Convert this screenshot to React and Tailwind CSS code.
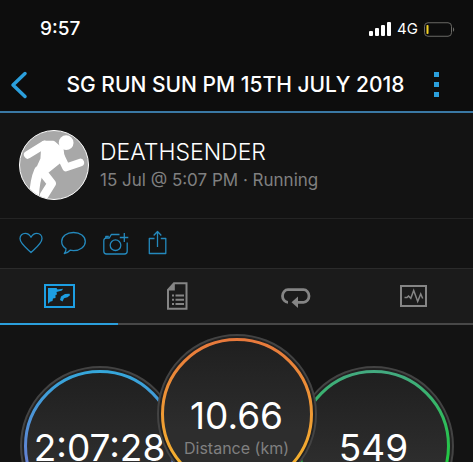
import { useState } from 'react'
import clsx from 'clsx'

const SignalIcon = () => (
  <svg width="22" height="14" viewBox="0 0 22 14" fill="#fff">
    <rect x="0" y="9" width="4" height="5" rx="1" />
    <rect x="6" y="6" width="4" height="8" rx="1" />
    <rect x="12" y="3" width="4" height="11" rx="1" />
    <rect x="18" y="0" width="4" height="14" rx="1" />
  </svg>
)

const BatteryIcon = () => (
  <svg width="31" height="15" viewBox="0 0 31 15" fill="none">
    <rect x="0.5" y="0.75" width="27" height="13.5" rx="3.5" stroke="#6a6965" />
    <rect x="2.5" y="3" width="2" height="9" rx="0.8" fill="#f5d327" />
    <path d="M29 5.2c1.6.7 1.6 3.9 0 4.6z" fill="#6a6965" />
  </svg>
)

const RunnerIcon = () => (
  <svg viewBox="0 0 70 70" className="h-full w-full" fill="none" stroke="#fff" strokeLinecap="round" strokeLinejoin="round">
    <circle cx="47.5" cy="12" r="7.6" fill="#fff" stroke="none" />
    <path d="M8 24.5 25 14" strokeWidth="8" />
    <path d="M39 20 47.5 37.5 62 32.5" strokeWidth="8" />
    <path d="M25 13 34 13 42 20 43 28 28 40 19 40 24 29z" fill="#fff" strokeWidth="6" />
    <path d="M19.5 41C16 49 15 56 14.5 67" strokeWidth="10" />
    <path d="M23 42 32.5 54 25 66" strokeWidth="9" />
  </svg>
)

const actions = [
  {
    label: 'Like',
    icon: <path d="M13 22.5C9.5 19 2 13.8 2 8.6 2 5.3 4.4 3.3 7.2 3.3c2.600 0 4.600 1.500 5.800 3.900 1.200-2.400 3.200-3.900 5.800-3.900 2.800 0 5.200 2 5.200 5.300 0 5.200-7.500 10.400-11 13.900z" />
  },
  {
    label: 'Comment',
    icon: <path d="M13.5 2.5c6.7 0 11.8 3.9 11.8 9s-5.100 9.100-11.800 9.100c-1.200 0-2.300-.1-3.400-.4-1.500 1.700-3.500 2.900-5.800 3.300 1.200-1.300 1.800-3 1.700-4.700-2.600-1.700-4.300-4.300-4.300-7.300 0-5.100 5.100-9 11.800-9z" />
  },
  {
    label: 'Add photo',
    icon: (
      <>
        <path d="M17.5 4.5H9.3L7.3 8H4.5c-1.7 0-2.7 1-2.7 2.7v10.6C1.8 23 2.8 24 4.5 24h18c1.7 0 2.7-1 2.7-2.7V12.5" />
        <path d="M3.8 8V6.5h3M22.3 3v9M17.8 7.5h8.5" />
        <circle cx="13.5" cy="15.2" r="5.3" />
      </>
    )
  },
  {
    label: 'Share',
    icon: <path d="M10.5 8.5H5.3v15h16.5v-15h-5M13.5 17V1.5M9.7 5.5l3.8-4 3.8 4" />
  }
]

const tabs = [
  {
    label: 'Map',
    icon: (
      <>
        <rect x="2" y="4" width="29" height="22" stroke="currentColor" strokeWidth="2" />
        <path d="M5 7h8.5l1 1.5 5.5-.8-1 1.800-5.500 1.500.5 2.500-1.500.5v3L10 17.500l-.5 2.500-2.500.8L5.500 22.500H5z" fill="currentColor" />
        <path d="M17 19l1-3.500 4-2.500 4.500-.3.500 1.500-2.500 2-3.500 1L19.500 20.500z" fill="currentColor" />
      </>
    )
  },
  {
    label: 'Details',
    icon: (
      <>
        <path d="M13 2.3h12.5v25.5H7V8.800z" stroke="currentColor" strokeWidth="2" />
        <path d="M13.8 2v7.5H6.5z" fill="currentColor" />
        <path d="M11 14.5h2M11 18.700h2M11 22.900h2M14.500 14.500h8.500M14.500 18.700h8.500M14.500 22.900h8.500" stroke="currentColor" strokeWidth="2" />
      </>
    )
  },
  {
    label: 'Laps',
    icon: (
      <>
        <path d="M9 21.3A5.5 6.3 0 0 1 9 8.7h15.500a5.500 6.300 0 0 1 0 12.600H18" stroke="currentColor" strokeWidth="2.8" />
        <path d="M12.5 21.3 19 15.500v11.500z" fill="currentColor" />
      </>
    )
  },
  {
    label: 'Charts',
    icon: (
      <>
        <rect x="4" y="5" width="25" height="20" stroke="currentColor" strokeWidth="2" />
        <path d="M7.5 16.5H10l1.5-1.5 2.300 2.300L16.700 9.500l4 11 3-7.500 2 4.500" stroke="currentColor" strokeWidth="1.5" />
      </>
    )
  }
]

const gauges = [
  { id: 'time', value: '2:07:28', from: '#35a7db', to: '#7b6fd0' },
  { id: 'distance', value: '10.66', label: 'Distance (km)', from: '#e8793c', to: '#f5b52e', main: true },
  { id: 'calories', value: '549', from: '#43aa80', to: '#10d822' }
]

const Gauge = ({ id, value, label, from, to, main }) => (
  <div className={clsx('grid size-40 shrink-0', main ? 'z-10 -mx-[23px]' : 'mt-8')}>
    <svg viewBox="0 0 160 160" className="col-start-1 row-start-1 size-40 overflow-visible">
      <defs>
        <linearGradient id={`ring-${id}`} x1="0" y1="0" x2="0" y2="1">
          <stop offset="0" stopColor={from} />
          <stop offset="0.9" stopColor={to} />
        </linearGradient>
        <linearGradient id={`fill-${id}`} x1="0" y1="0" x2="0" y2="1">
          <stop offset="0" stopColor="#1f1f1f" />
          <stop offset="0.6" stopColor="#2d2d2d" />
          <stop offset="1" stopColor="#2d2d2d" />
        </linearGradient>
      </defs>
      <circle cx="80" cy="80" r="79" fill="#222" stroke="#434343" strokeWidth="2" />
      <circle cx="80" cy="80" r="74.5" fill={`url(#fill-${id})`} stroke={`url(#ring-${id})`} strokeWidth="3" />
    </svg>
    <div className="col-start-1 row-start-1 pt-[58px] text-center">
      <p className="text-[37px] leading-12 whitespace-nowrap text-white">{value}</p>
      {label && <p className="text-base leading-4 text-[#808080]">{label}</p>}
    </div>
  </div>
)

const App = () => {
  const [active, setActive] = useState('Map')

  return (
    <div className="flex h-screen flex-col overflow-hidden bg-[#131313] font-['Inter','Liberation_Sans',sans-serif]">
      <header className="border-b-2 border-[#3a78a4] bg-[#0d0d0d]">
        <div className="flex h-[58px] items-center justify-between pr-[18px] pl-10 text-white">
          <span className="text-[19px] font-medium">9:57</span>
          <div className="flex items-center gap-1.5">
            <SignalIcon />
            <span className="text-[15px]">4G</span>
            <BatteryIcon />
          </div>
        </div>
        <div className="flex h-[53px] items-center justify-between pr-6 pl-2.5">
          <button type="button" aria-label="Back" className="w-9">
            <svg width="18" height="28" viewBox="0 0 18 28" fill="none" stroke="#2b9fdc" strokeWidth="3.5" strokeLinecap="round" strokeLinejoin="round">
              <path d="M15 2.5 3 14l12 11.5" />
            </svg>
          </button>
          <h1 className="text-[21px] font-medium whitespace-nowrap text-white">SG RUN SUN PM 15TH JULY 2018</h1>
          <button type="button" aria-label="More" className="flex w-6 flex-col items-center gap-[5px]">
            <span className="size-[5px] bg-[#2b9fdc]" />
            <span className="size-[5px] bg-[#2b9fdc]" />
            <span className="size-[5px] bg-[#2b9fdc]" />
          </button>
        </div>
      </header>

      <section className="flex gap-[11px] border-b border-[#242424] px-[19px] pt-[17px] pb-[18px]">
        <div className="size-[70px] shrink-0 overflow-hidden rounded-full border border-white bg-[#a8a8a8]">
          <RunnerIcon />
        </div>
        <div className="pt-1.5">
          <h2 className="text-[23px] leading-8 font-light text-white">DEATHSENDER</h2>
          <p className="text-[17px] leading-6 text-[#808080]">15 Jul @ 5:07 PM · Running</p>
        </div>
      </section>

      <div className="flex gap-4 border-b border-[#2b2b2b] px-[18px] py-[11px]">
        {actions.map((a) => (
          <button key={a.label} type="button" aria-label={a.label}>
            <svg width="27" height="27" viewBox="0 0 27 27" fill="none" stroke="#2489bd" strokeWidth="1.3" strokeLinejoin="round" className="-mr-px">
              {a.icon}
            </svg>
          </button>
        ))}
      </div>

      <nav className="grid grid-cols-4 bg-[#1b1b1b]">
        {tabs.map((t) => (
          <button
            key={t.label}
            type="button"
            aria-label={t.label}
            onClick={() => setActive(t.label)}
            className={clsx(
              'flex h-14 items-center justify-center border-b-2',
              active === t.label ? 'border-[#2b9fdc] text-[#1d9fe3]' : 'border-[#484848] text-[#858585]'
            )}
          >
            <svg width="33" height="30" viewBox="0 0 33 30" fill="none">{t.icon}</svg>
          </button>
        ))}
      </nav>

      <main className="flex flex-1 justify-center overflow-hidden pt-[9px]">
        {gauges.map((g) => <Gauge key={g.id} {...g} />)}
      </main>
    </div>
  )
}

export default App
